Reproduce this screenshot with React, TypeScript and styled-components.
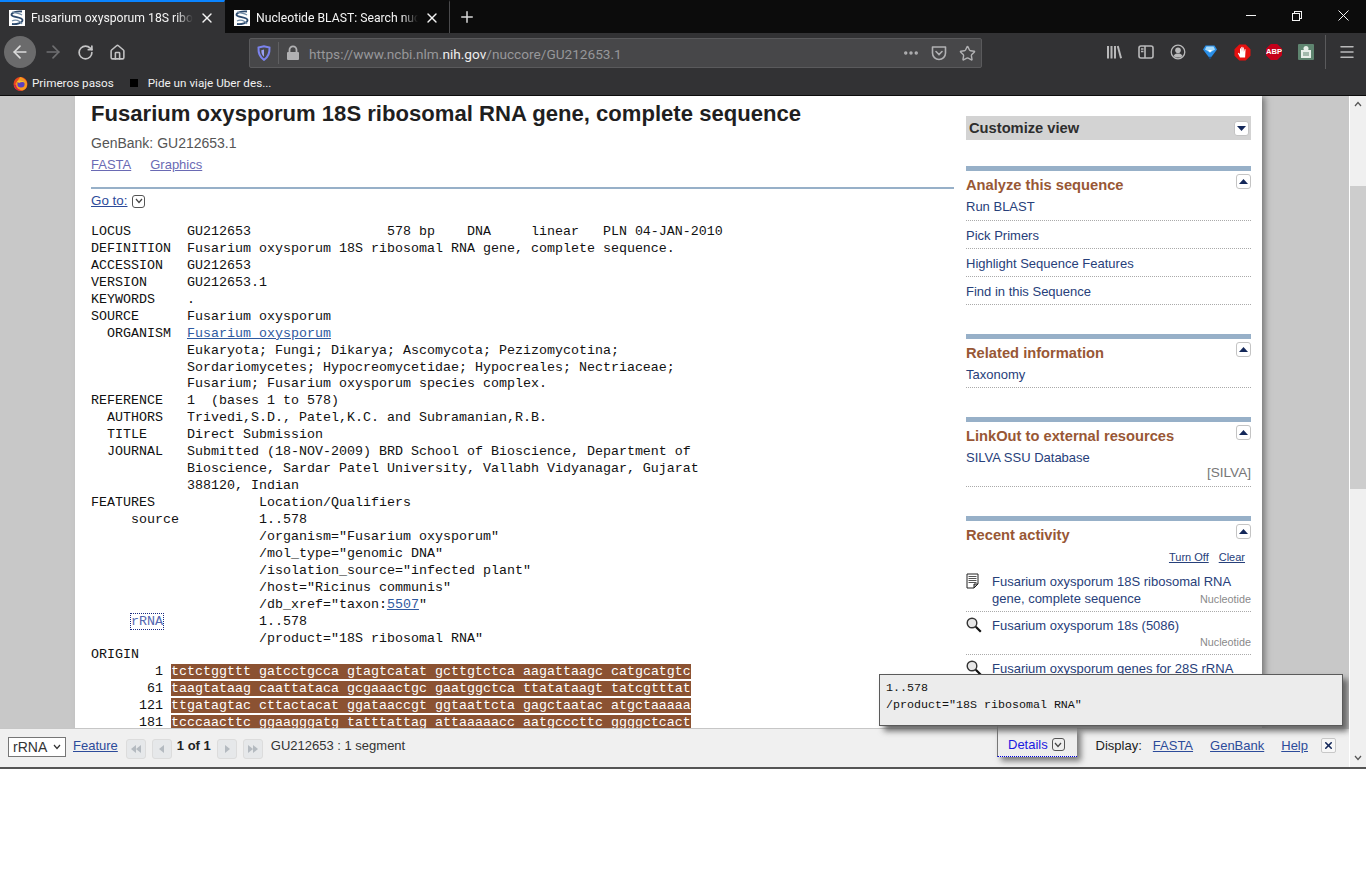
import React from 'react';
import styled, { createGlobalStyle } from 'styled-components';
import { ArrowLeft, ArrowRight, RotateCw, House, Plus, X, Ellipsis, Star, Menu } from 'lucide-react';

const GlobalStyle = createGlobalStyle`
  html, body {
    margin: 0;
    padding: 0;
    background: #fff;
    overflow: hidden;
  }
  a { cursor: pointer; }
`;

const Window = styled.div`
  width: 1366px;
  height: 872px;
  display: flex;
  flex-direction: column;
  background: #fff;
  font-family: 'Liberation Sans', Arial, sans-serif;
`;

/* browser chrome */
const TabStrip = styled.div`
  height: 33px;
  background: #0c0c0c;
  display: flex;
  flex-shrink: 0;
`;

const Tab = styled.div<{ $active?: boolean }>`
  width: 225px;
  height: 33px;
  box-sizing: border-box;
  display: flex;
  align-items: center;
  padding: 0 9px;
  gap: 6px;
  color: #f4f4f4;
  background: ${({ $active }) => ($active ? '#323234' : 'transparent')};
  border-top: 2px solid ${({ $active }) => ($active ? '#0a84ff' : 'transparent')};
  border-right: 1px solid ${({ $active }) => ($active ? 'transparent' : '#4a4a4c')};
  font: 12.2px Roboto, sans-serif;
`;

const TabTitle = styled.span`
  flex: 1;
  overflow: hidden;
  white-space: nowrap;
  -webkit-mask-image: linear-gradient(to right, #000 90%, transparent 100%);
  mask-image: linear-gradient(to right, #000 90%, transparent 100%);
`;

const NewTab = styled.div`
  width: 34px;
  display: flex;
  align-items: center;
  justify-content: center;
  color: #d8d8d8;
`;

const WindowControls = styled.div`
  margin-left: auto;
  display: flex;
  color: #f4f4f4;
`;

const WindowButton = styled.div`
  width: 46px;
  height: 31px;
  display: flex;
  align-items: center;
  justify-content: center;
`;

const NavBar = styled.div`
  height: 38px;
  background: #323234;
  display: flex;
  align-items: center;
  padding-left: 4px;
  flex-shrink: 0;
`;

const NavButton = styled.div<{ $round?: boolean; $dim?: boolean }>`
  width: 32px;
  height: 32px;
  border-radius: 50%;
  display: flex;
  align-items: center;
  justify-content: center;
  color: ${({ $dim, $round }) => ($dim ? '#6f6f71' : $round ? '#dcdcdc' : '#c4c4c5')};
  background: ${({ $round }) => ($round ? '#6b6b6c' : 'transparent')};
  margin-right: ${({ $round }) => ($round ? '1px' : '0')};
`;

const UrlBar = styled.div`
  width: 733px;
  height: 30px;
  margin-left: 116px;
  margin-top: 2px;
  box-sizing: border-box;
  background: #474749;
  border: 1px solid #5a5a5c;
  border-radius: 2px;
  display: flex;
  align-items: center;
  padding-left: 6px;
  color: #b1b1b3;
`;

const UrlDivider = styled.div`
  width: 1px;
  height: 22px;
  background: #5f5f61;
  margin: 0 7px 0 6px;
`;

const UrlText = styled.div`
  flex: 1;
  margin: 1px 0 0 9px;
  font: 13.65px Roboto, sans-serif;
  color: #97979a;
  white-space: nowrap;
  strong {
    font-weight: 400;
    color: #eeeeee;
  }
`;

const UrlAction = styled.div`
  width: 28px;
  display: flex;
  justify-content: center;
  color: #b1b1b3;
`;

const ToolIcons = styled.div`
  margin-left: 116px;
  display: flex;
  align-items: center;
`;

const ToolButton = styled.div`
  width: 32px;
  height: 32px;
  display: flex;
  align-items: center;
  justify-content: center;
  color: #b9b9ba;
`;

const ToolDivider = styled.div`
  width: 1px;
  height: 34px;
  background: #5a5a5c;
  margin: 0 5px 0 3px;
`;

const BookmarksBar = styled.div`
  height: 24px;
  background: #323234;
  border-bottom: 1px solid #0c0c0c;
  display: flex;
  align-items: center;
  padding-left: 13px;
  color: #f0f0f0;
  font: 11.7px Roboto, sans-serif;
  flex-shrink: 0;
`;

const Bookmark = styled.div`
  display: flex;
  align-items: center;
  gap: 4px;
  margin-right: 16px;
`;

const BlackSquare = styled.span`
  width: 8px;
  height: 8px;
  background: #000;
  margin-right: 10px;
`;

/* page viewport */
const Viewport = styled.div`
  height: 671px;
  display: flex;
  border-bottom: 2px solid #555;
  flex-shrink: 0;
`;

const PageArea = styled.div`
  position: relative;
  flex: 1;
  background: #c8c8c8;
  overflow: hidden;
`;

const Sheet = styled.div`
  width: 1187px;
  height: 760px;
  margin-left: 75px;
  background: #fff;
  box-shadow: 4px 0 6px -1px #777;
  display: flex;
`;

const Main = styled.div`
  width: 863px;
  margin-left: 16px;
`;

const Title = styled.h1`
  margin: 5px 0 0;
  font-size: 22.1px;
  line-height: 25px;
  font-weight: 700;
  color: #1f1f1f;
`;

const Subtitle = styled.div`
  margin-top: 9px;
  font-size: 14px;
  line-height: 16px;
  color: #555;
`;

const FormatLinks = styled.div`
  margin-top: 6px;
  display: flex;
  gap: 19px;
  font-size: 13px;
  line-height: 16px;
`;

const VisitedLink = styled.a`
  color: #6a6ab4;
  text-decoration: underline;
`;

const Rule = styled.div`
  height: 2px;
  background: #97b0c8;
  margin-top: 14px;
`;

const GoTo = styled.div`
  margin-top: 4px;
  display: flex;
  align-items: center;
  gap: 5px;
  font-size: 13.4px;
  line-height: 16px;
`;

const PlainLink = styled.a`
  color: #2c4b9a;
  text-decoration: underline;
`;

const Chevron = styled.span`
  width: 11px;
  height: 11px;
  border: 1px solid #555;
  border-radius: 3px;
  display: inline-flex;
  align-items: center;
  justify-content: center;
  color: #444;
`;

const Record = styled.div`
  margin-top: 15px;
  font: 13.33px/16.95px 'Liberation Mono', 'Courier New', monospace;
  color: #111;
`;

const RecordLine = styled.div`
  height: 16.95px;
  white-space: pre;
`;

const RecordLink = styled.a`
  color: #2f5aa0;
  text-decoration: underline;
`;

const FocusLink = styled.a`
  color: #5568b0;
  outline: 1px dotted #1a2a80;
`;

const Highlight = styled.span`
  background: #8b5232;
  color: #fff;
`;

const Sidebar = styled.div`
  width: 285px;
  margin-left: 12px;
`;

const CustomizeBox = styled.div`
  margin-top: 20px;
  margin-bottom: 26px;
  height: 24px;
  background: #d3d3d3;
  display: flex;
  align-items: center;
  justify-content: space-between;
  padding: 0 2px 0 3px;
  font-size: 14.7px;
  font-weight: 700;
  color: #2e2e2e;
`;

const ToggleBox = styled.span`
  width: 13px;
  height: 13px;
  background: #fff;
  border: 1px solid #c4c4c4;
  border-radius: 3px;
  display: flex;
  align-items: center;
  justify-content: center;
`;

const SideSection = styled.section`
  border-top: 5px solid #97b0c8;
  margin-bottom: 29px;
`;

const SideHeader = styled.div`
  display: flex;
  justify-content: space-between;
  align-items: flex-start;
`;

const SideTitle = styled.h3`
  margin: 7px 0 0;
  font-size: 14.7px;
  line-height: 14px;
  font-weight: 700;
  color: #985735;
`;

const HeaderToggle = styled.div`
  margin-top: 3px;
`;

const SideItem = styled.div<{ $tall?: boolean }>`
  padding: 7px 0 ${({ $tall }) => ($tall ? '6px' : '5px')};
  border-bottom: 1px dotted #aaa;
  font-size: 13px;
  line-height: 15px;
  color: #27407a;
`;

const SourceTag = styled.div`
  text-align: right;
  font-size: 13.6px;
  line-height: 16px;
  color: #777;
`;

const ActivityControls = styled.div`
  display: flex;
  justify-content: flex-end;
  gap: 10px;
  margin-top: 9px;
  padding-right: 6px;
  font-size: 11px;
  line-height: 13px;
`;

const DarkLink = styled.a`
  color: #27407a;
  text-decoration: underline;
`;

const ActivityList = styled.div`
  margin-top: 4px;
`;

const ActivityItem = styled.div`
  display: grid;
  grid-template-columns: 26px 1fr;
  padding: 5px 0 3px;
  border-bottom: 1px dotted #aaa;
  font-size: 13px;
  line-height: 17px;
  color: #27407a;
`;

const ActivityRow = styled.div`
  display: flex;
  justify-content: space-between;
  align-items: baseline;
  white-space: nowrap;
`;

const SmallTag = styled.span`
  margin-left: auto;
  font-size: 10.8px;
  color: #8a8a8a;
`;

/* bottom feature bar */
const FeatureBar = styled.div`
  position: absolute;
  left: 0;
  right: 0;
  bottom: 0;
  height: 39px;
  box-sizing: border-box;
  background: #f0f0f0;
  border-top: 1px solid #c6c6c6;
  display: flex;
  align-items: center;
  padding: 0 0 6px 8px;
  font-size: 13px;
  color: #222;
`;

const FeatureSelect = styled.div`
  width: 58px;
  height: 20px;
  box-sizing: border-box;
  background: #fff;
  border: 1px solid #767676;
  display: flex;
  align-items: center;
  justify-content: space-between;
  padding: 0 4px;
  font-size: 14px;
  color: #333;
  margin: 3px 7px 0 0;
`;

const PagerGroup = styled.div<{ $lead?: boolean }>`
  display: flex;
  gap: 6px;
  margin-top: 8px;
  margin-left: ${({ $lead }) => ($lead ? '8px' : '0')};
`;

const PagerButton = styled.span`
  width: 18px;
  height: 18px;
  background: #e6e8ea;
  border: 1px solid #dcdcdc;
  border-radius: 3px;
  display: flex;
  align-items: center;
  justify-content: center;
`;

const PagerCount = styled.b`
  margin: 0 6px 0 5px;
  color: #222;
`;

const SegmentInfo = styled.span`
  margin-left: 8px;
  color: #333;
`;

const DisplayGroup = styled.div`
  margin-left: auto;
  display: flex;
  align-items: center;
  margin-right: 13px;
  gap: 17px;
`;

const DisplayLabel = styled.span`
  color: #222;
  margin-right: -6px;
`;

const BarLink = styled.a`
  color: #2c4b9a;
  text-decoration: underline;
`;

const CloseBox = styled.span`
  width: 13px;
  height: 13px;
  background: #f7f7f7;
  border: 1px solid #c8c8c8;
  border-radius: 2px;
  display: flex;
  align-items: center;
  justify-content: center;
  margin-left: -4px;
  color: #14285a;
`;

const Popup = styled.div`
  position: absolute;
  left: 879px;
  top: 578px;
  width: 456px;
  height: 50px;
  background: #ececec;
  border: 1px solid #5a5a5a;
  box-shadow: 5px 5px 6px #666;
  padding-left: 6px;
  font: 11.67px/17px 'Liberation Mono', 'Courier New', monospace;
  color: #111;
`;

const PopupBody = styled.div`
  padding-top: 5px;
`;

const DetailsTab = styled.div`
  position: absolute;
  left: 997px;
  top: 630px;
  width: 80px;
  height: 31px;
  box-sizing: border-box;
  background: #eee;
  border-left: 1px solid #777;
  border-bottom: 1px dotted #0000e0;
  box-shadow: 4px 4px 6px #777;
  display: flex;
  align-items: center;
  gap: 4px;
  padding: 7px 0 0 10px;
  font-size: 13px;
  color: #1a1ae0;
`;

const Scrollbar = styled.div`
  width: 16px;
  background: #f0f0f0;
  border-left: 1px solid #fff;
  display: flex;
  flex-direction: column;
  align-items: center;
  color: #555;
  padding-top: 5px;
`;

const ScrollThumb = styled.div`
  width: 16px;
  height: 303px;
  margin-top: 79px;
  background: #cdcdcd;
`;

const ScrollDown = styled.div`
  margin-top: auto;
  padding-bottom: 2px;
`;

const ChevronUpWrap = styled.span`
  display: flex;
  transform: rotate(180deg);
`;

const Favicon = () => (
  <svg width="16" height="16" viewBox="0 0 16 16">
    <rect width="16" height="16" fill="#fff" />
    <path d="M13 1.5C8 1 2 2.5 2.5 5S13 7 13.5 10 7 14.500 3 14" fill="none" stroke="#2c4a6e" strokeWidth="1.800" />
    <path d="M3 2c3 1 8 1 10 3M3 11c3-1.500 8-1 10 3" fill="none" stroke="#6f8aa5" strokeWidth="1.200" />
  </svg>
);

const FirefoxLogo = () => (
  <svg width="15" height="15" viewBox="0 0 15 15">
    <circle cx="7.500" cy="8" r="7" fill="#e8461e" />
    <path d="M2 12C1 8 5 5 7 1c3 .5 7 3 7 7s-2 6-5 6.500" fill="#f79a1f" />
    <circle cx="8" cy="8" r="3.600" fill="#5a3fc0" />
    <path d="M4 5.500c2-2 7-1.500 8 1.500-2-1.500-4-1-6 0z" fill="#f9c12e" />
    <path d="M1 9c1 4 4 6 7 5.500-3-1-5-3-5-6z" fill="#d4204a" />
  </svg>
);

const ShieldIcon = () => (
  <svg width="16" height="16" viewBox="0 0 16 16" fill="none">
    <path d="M2.500 2.500 8 1.200l5.500 1.300c.3 5.500-1 9.500-5.500 12.300C3.500 12 2.200 8 2.500 2.500Z" stroke="#7b83ee" strokeWidth="2" />
    <path d="M8 4.500v7.200c-2-1.500-2.700-3.700-2.700-6.500z" fill="#9aa0f2" />
  </svg>
);

const LockIcon = () => (
  <svg width="14" height="16" viewBox="0 0 14 16" fill="none">
    <rect x="1" y="7" width="12" height="8" rx="1" fill="#b1b1b3" />
    <path d="M3.500 7V4.800a3.500 3.500 0 0 1 7 0V7" stroke="#b1b1b3" strokeWidth="1.800" />
  </svg>
);

const PocketIcon = () => (
  <svg width="16" height="16" viewBox="0 0 16 16" fill="none" stroke="currentColor" strokeWidth="1.600">
    <path d="M1.500 2h13v6a6.500 6.500 0 0 1-13 0Z" strokeLinejoin="round" />
    <path d="m5 6.500 3 3 3-3" strokeLinecap="round" />
  </svg>
);

const LibraryIcon = () => (
  <svg width="16" height="16" viewBox="0 0 16 16" fill="currentColor">
    <rect x="1" y="2" width="2" height="12.500" />
    <rect x="4.500" y="2" width="2" height="12.500" />
    <rect x="8" y="2" width="2" height="12.500" />
    <path d="m10.800 2.300 1.900-.6 3.300 12.200-1.900.6z" />
  </svg>
);

const SidebarIcon = () => (
  <svg width="16" height="16" viewBox="0 0 16 16" fill="none" stroke="currentColor" strokeWidth="1.600">
    <rect x="1" y="2" width="14" height="12" rx="2" />
    <path d="M7 2v12M3 5h2.500M3 7.500h2.500" />
  </svg>
);

const AccountIcon = () => (
  <svg width="16" height="16" viewBox="0 0 16 16" fill="none">
    <circle cx="8" cy="8" r="6.800" stroke="currentColor" strokeWidth="1.300" />
    <circle cx="8" cy="6.300" r="2.800" fill="currentColor" />
    <path d="M3.500 12c1-2 2.500-2.500 4.500-2.500s3.500.5 4.500 2.500c-2.500 2-6.500 2-9 0z" fill="currentColor" />
  </svg>
);

const DiamondIcon = () => (
  <svg width="16" height="16" viewBox="0 0 16 16">
    <path d="M3.500 1.500h9L15 5.500 8 14.800 1 5.500z" fill="#2a8fe8" />
    <path d="M4.500 2.500h7l1.500 3-5 3-5-3z" fill="#a8dcfb" />
    <path d="M8 8.500 6 6h4z" fill="#fff" />
    <path d="M6.500 12.800h3L8 15.500z" fill="#1b4f86" />
  </svg>
);

const StopHandIcon = () => (
  <svg width="17" height="17" viewBox="0 0 17 17">
    <path d="M5.300.5h6.400l4.800 4.800v6.400l-4.800 4.800H5.300L.5 11.700V5.300z" fill="#e5100f" />
    <path d="M6 13.500 3.800 9.300l1-.6L6 10V4.500l1-.3.300 3.800V3l1.100-.2.200 4.800.1-4.200 1.100.2.100 4.400.8-3 .9.300-.5 8.200z" fill="#fff" />
  </svg>
);

const AbpIcon = styled.span`
  width: 16px;
  height: 16px;
  background: #c4001a;
  clip-path: polygon(30% 0, 70% 0, 100% 30%, 100% 70%, 70% 100%, 30% 100%, 0 70%, 0 30%);
  color: #fff;
  font: 700 7.6px/16px 'Liberation Sans', sans-serif;
  text-align: center;
  white-space: nowrap;
`;

const ClipIcon = () => (
  <svg width="16" height="16" viewBox="0 0 16 16">
    <rect width="16" height="16" rx="1" fill="#5f8570" />
    <rect x="3" y="6" width="10" height="8" fill="#e8efe9" />
    <circle cx="8" cy="4.500" r="2.500" fill="#e8efe9" />
    <path d="M5 9h6M5 11h6" stroke="#5f8570" />
  </svg>
);

const MinimizeIcon = () => (
  <svg width="10" height="10" viewBox="0 0 10 10" shapeRendering="crispEdges">
    <rect y="4" width="10" height="1" fill="currentColor" />
  </svg>
);

const RestoreIcon = () => (
  <svg width="10" height="10" viewBox="0 0 10 10" fill="none" stroke="currentColor" shapeRendering="crispEdges">
    <rect x=".5" y="2.500" width="7" height="7" />
    <path d="M2.500 2.500v-2h7v7h-2" />
  </svg>
);

const CloseIcon = () => (
  <svg width="11" height="11" viewBox="0 0 11 11" stroke="currentColor" strokeWidth="1">
    <path d="m.5.5 10 10M10.500.5l-10 10" />
  </svg>
);

const Triangle = ({ up }: { up?: boolean }) => (
  <svg width="9" height="5" viewBox="0 0 9 5">
    <path d={up ? 'M4.500 0 9 5H0z' : 'M0 0h9L4.500 5z'} fill="#14285a" />
  </svg>
);

const SmallChevron = () => (
  <svg width="8" height="6" viewBox="0 0 8 6" fill="none" stroke="currentColor" strokeWidth="1.200">
    <path d="m1 1 3 3.500L7 1" />
  </svg>
);

const SmallChevronUp = () => (
  <ChevronUpWrap>
    <SmallChevron />
  </ChevronUpWrap>
);

const DocIcon = () => (
  <svg width="13" height="16" viewBox="0 0 13 16" fill="none">
    <path d="M1 1h11v10l-4 4H1z" fill="#fff" stroke="#222" />
    <path d="M2.500 3.500h8M2.500 5.500h8M2.500 7.500h8M2.500 9.500h8" stroke="#555" />
    <path d="M8 15v-4h4z" fill="#aaa" stroke="#222" />
  </svg>
);

const SearchIcon = () => (
  <svg width="16" height="16" viewBox="0 0 16 16" fill="none">
    <circle cx="6" cy="6" r="4.800" fill="#e6e6e6" stroke="#333" strokeWidth="1.400" />
    <path d="m9.800 9.800 5 5" stroke="#111" strokeWidth="2.200" />
  </svg>
);

const PagerGlyph = ({ d }: { d: string }) => (
  <svg width="10" height="8" viewBox="0 0 10 8">
    <path d={d} fill="#b4bac0" />
  </svg>
);

const recordLines: React.ReactNode[] = [
  'LOCUS       GU212653                 578 bp    DNA     linear   PLN 04-JAN-2010',
  'DEFINITION  Fusarium oxysporum 18S ribosomal RNA gene, complete sequence.',
  'ACCESSION   GU212653',
  'VERSION     GU212653.1',
  'KEYWORDS    .',
  'SOURCE      Fusarium oxysporum',
  <>
    {'  ORGANISM  '}
    <RecordLink>Fusarium oxysporum</RecordLink>
  </>,
  '            Eukaryota; Fungi; Dikarya; Ascomycota; Pezizomycotina;',
  '            Sordariomycetes; Hypocreomycetidae; Hypocreales; Nectriaceae;',
  '            Fusarium; Fusarium oxysporum species complex.',
  'REFERENCE   1  (bases 1 to 578)',
  '  AUTHORS   Trivedi,S.D., Patel,K.C. and Subramanian,R.B.',
  '  TITLE     Direct Submission',
  '  JOURNAL   Submitted (18-NOV-2009) BRD School of Bioscience, Department of',
  '            Bioscience, Sardar Patel University, Vallabh Vidyanagar, Gujarat',
  '            388120, Indian',
  'FEATURES             Location/Qualifiers',
  '     source          1..578',
  '                     /organism="Fusarium oxysporum"',
  '                     /mol_type="genomic DNA"',
  '                     /isolation_source="infected plant"',
  '                     /host="Ricinus communis"',
  <>
    {'                     /db_xref="taxon:'}
    <RecordLink>5507</RecordLink>
    {'"'}
  </>,
  <>
    {'     '}
    <FocusLink>rRNA</FocusLink>
    {'            1..578'}
  </>,
  '                     /product="18S ribosomal RNA"',
  'ORIGIN',
];

const sequence = [
  ['        1 ', 'tctctggttt gatcctgcca gtagtcatat gcttgtctca aagattaagc catgcatgtc'],
  ['       61 ', 'taagtataag caattataca gcgaaactgc gaatggctca ttatataagt tatcgtttat'],
  ['      121 ', 'ttgatagtac cttactacat ggataaccgt ggtaattcta gagctaatac atgctaaaaa'],
  ['      181 ', 'tcccaacttc ggaagggatg tatttattag attaaaaacc aatgcccttc ggggctcact'],
];

const ToggleUp = () => (
  <HeaderToggle>
    <ToggleBox>
      <Triangle up />
    </ToggleBox>
  </HeaderToggle>
);

const App: React.FC = () => {
  return (
    <Window>
      <GlobalStyle />
      <TabStrip>
        <Tab $active>
          <Favicon />
          <TabTitle>Fusarium oxysporum 18S ribosomal RNA</TabTitle>
          <X size={16} />
        </Tab>
        <Tab>
          <Favicon />
          <TabTitle>Nucleotide BLAST: Search nucleotide</TabTitle>
          <X size={16} />
        </Tab>
        <NewTab>
          <Plus size={18} />
        </NewTab>
        <WindowControls>
          <WindowButton>
            <MinimizeIcon />
          </WindowButton>
          <WindowButton>
            <RestoreIcon />
          </WindowButton>
          <WindowButton>
            <CloseIcon />
          </WindowButton>
        </WindowControls>
      </TabStrip>

      <NavBar>
        <NavButton $round>
          <ArrowLeft size={20} />
        </NavButton>
        <NavButton $dim>
          <ArrowRight size={20} />
        </NavButton>
        <NavButton>
          <RotateCw size={17} strokeWidth={2.4} />
        </NavButton>
        <NavButton>
          <House size={17} strokeWidth={2.2} />
        </NavButton>
        <UrlBar>
          <ShieldIcon />
          <UrlDivider />
          <LockIcon />
          <UrlText>
            https://www.ncbi.nlm.<strong>nih.gov</strong>/nuccore/GU212653.1
          </UrlText>
          <UrlAction>
            <Ellipsis size={18} strokeWidth={2.6} />
          </UrlAction>
          <UrlAction>
            <PocketIcon />
          </UrlAction>
          <UrlAction>
            <Star size={17} strokeWidth={2} />
          </UrlAction>
        </UrlBar>
        <ToolIcons>
          <ToolButton>
            <LibraryIcon />
          </ToolButton>
          <ToolButton>
            <SidebarIcon />
          </ToolButton>
          <ToolButton>
            <AccountIcon />
          </ToolButton>
          <ToolButton>
            <DiamondIcon />
          </ToolButton>
          <ToolButton>
            <StopHandIcon />
          </ToolButton>
          <ToolButton>
            <AbpIcon>ABP</AbpIcon>
          </ToolButton>
          <ToolButton>
            <ClipIcon />
          </ToolButton>
          <ToolDivider />
          <ToolButton>
            <Menu size={18} strokeWidth={2} />
          </ToolButton>
        </ToolIcons>
      </NavBar>

      <BookmarksBar>
        <Bookmark>
          <FirefoxLogo />
          Primeros pasos
        </Bookmark>
        <BlackSquare />
        <Bookmark>Pide un viaje Uber des...</Bookmark>
      </BookmarksBar>

      <Viewport>
        <PageArea>
          <Sheet>
            <Main>
              <Title>Fusarium oxysporum 18S ribosomal RNA gene, complete sequence</Title>
              <Subtitle>GenBank: GU212653.1</Subtitle>
              <FormatLinks>
                <VisitedLink>FASTA</VisitedLink>
                <VisitedLink>Graphics</VisitedLink>
              </FormatLinks>
              <Rule />
              <GoTo>
                <PlainLink>Go to:</PlainLink>
                <Chevron>
                  <SmallChevron />
                </Chevron>
              </GoTo>
              <Record>
                {recordLines.map((line, index) => (
                  <RecordLine key={index}>{line}</RecordLine>
                ))}
                {sequence.map(([label, bases]) => (
                  <RecordLine key={label}>
                    {label}
                    <Highlight>{bases}</Highlight>
                  </RecordLine>
                ))}
              </Record>
            </Main>

            <Sidebar>
              <CustomizeBox>
                Customize view
                <ToggleBox>
                  <Triangle />
                </ToggleBox>
              </CustomizeBox>

              <SideSection>
                <SideHeader>
                  <SideTitle>Analyze this sequence</SideTitle>
                  <ToggleUp />
                </SideHeader>
                <SideItem $tall>Run BLAST</SideItem>
                <SideItem>Pick Primers</SideItem>
                <SideItem>Highlight Sequence Features</SideItem>
                <SideItem>Find in this Sequence</SideItem>
              </SideSection>

              <SideSection>
                <SideHeader>
                  <SideTitle>Related information</SideTitle>
                  <ToggleUp />
                </SideHeader>
                <SideItem>Taxonomy</SideItem>
              </SideSection>

              <SideSection>
                <SideHeader>
                  <SideTitle>LinkOut to external resources</SideTitle>
                  <ToggleUp />
                </SideHeader>
                <SideItem>
                  SILVA SSU Database
                  <SourceTag>[SILVA]</SourceTag>
                </SideItem>
              </SideSection>

              <SideSection>
                <SideHeader>
                  <SideTitle>Recent activity</SideTitle>
                  <ToggleUp />
                </SideHeader>
                <ActivityControls>
                  <DarkLink>Turn Off</DarkLink>
                  <DarkLink>Clear</DarkLink>
                </ActivityControls>
                <ActivityList>
                  <ActivityItem>
                    <DocIcon />
                    <div>
                      <ActivityRow>Fusarium oxysporum 18S ribosomal RNA</ActivityRow>
                      <ActivityRow>
                        gene, complete sequence
                        <SmallTag>Nucleotide</SmallTag>
                      </ActivityRow>
                    </div>
                  </ActivityItem>
                  <ActivityItem>
                    <SearchIcon />
                    <div>
                      <ActivityRow>Fusarium oxysporum 18s (5086)</ActivityRow>
                      <ActivityRow>
                        <SmallTag>Nucleotide</SmallTag>
                      </ActivityRow>
                    </div>
                  </ActivityItem>
                  <ActivityItem>
                    <SearchIcon />
                    <div>
                      <ActivityRow>Fusarium oxysporum genes for 28S rRNA</ActivityRow>
                    </div>
                  </ActivityItem>
                </ActivityList>
              </SideSection>
            </Sidebar>
          </Sheet>

          <FeatureBar>
            <FeatureSelect>
              rRNA
              <SmallChevron />
            </FeatureSelect>
            <BarLink>Feature</BarLink>
            <PagerGroup $lead>
              <PagerButton>
                <PagerGlyph d="M5 0v8L0 4zM10 0v8L5 4z" />
              </PagerButton>
              <PagerButton>
                <PagerGlyph d="M7 0v8L2 4z" />
              </PagerButton>
            </PagerGroup>
            <PagerCount>1 of 1</PagerCount>
            <PagerGroup>
              <PagerButton>
                <PagerGlyph d="M3 0v8l5-4z" />
              </PagerButton>
              <PagerButton>
                <PagerGlyph d="M0 0v8l5-4zM5 0v8l5-4z" />
              </PagerButton>
            </PagerGroup>
            <SegmentInfo>GU212653 : 1 segment</SegmentInfo>
            <DisplayGroup>
              <DisplayLabel>Display:</DisplayLabel>
              <BarLink>FASTA</BarLink>
              <BarLink>GenBank</BarLink>
              <BarLink>Help</BarLink>
              <CloseBox>
                <X size={11} strokeWidth={3.5} />
              </CloseBox>
            </DisplayGroup>
          </FeatureBar>

          <DetailsTab>
            Details
            <Chevron>
              <SmallChevron />
            </Chevron>
          </DetailsTab>
          <Popup>
            <PopupBody>
              1..578
              <br />
              /product="18S ribosomal RNA"
            </PopupBody>
          </Popup>
        </PageArea>
        <Scrollbar>
          <SmallChevronUp />
          <ScrollThumb />
          <ScrollDown>
            <SmallChevron />
          </ScrollDown>
        </Scrollbar>
      </Viewport>
    </Window>
  );
};

export default App;
